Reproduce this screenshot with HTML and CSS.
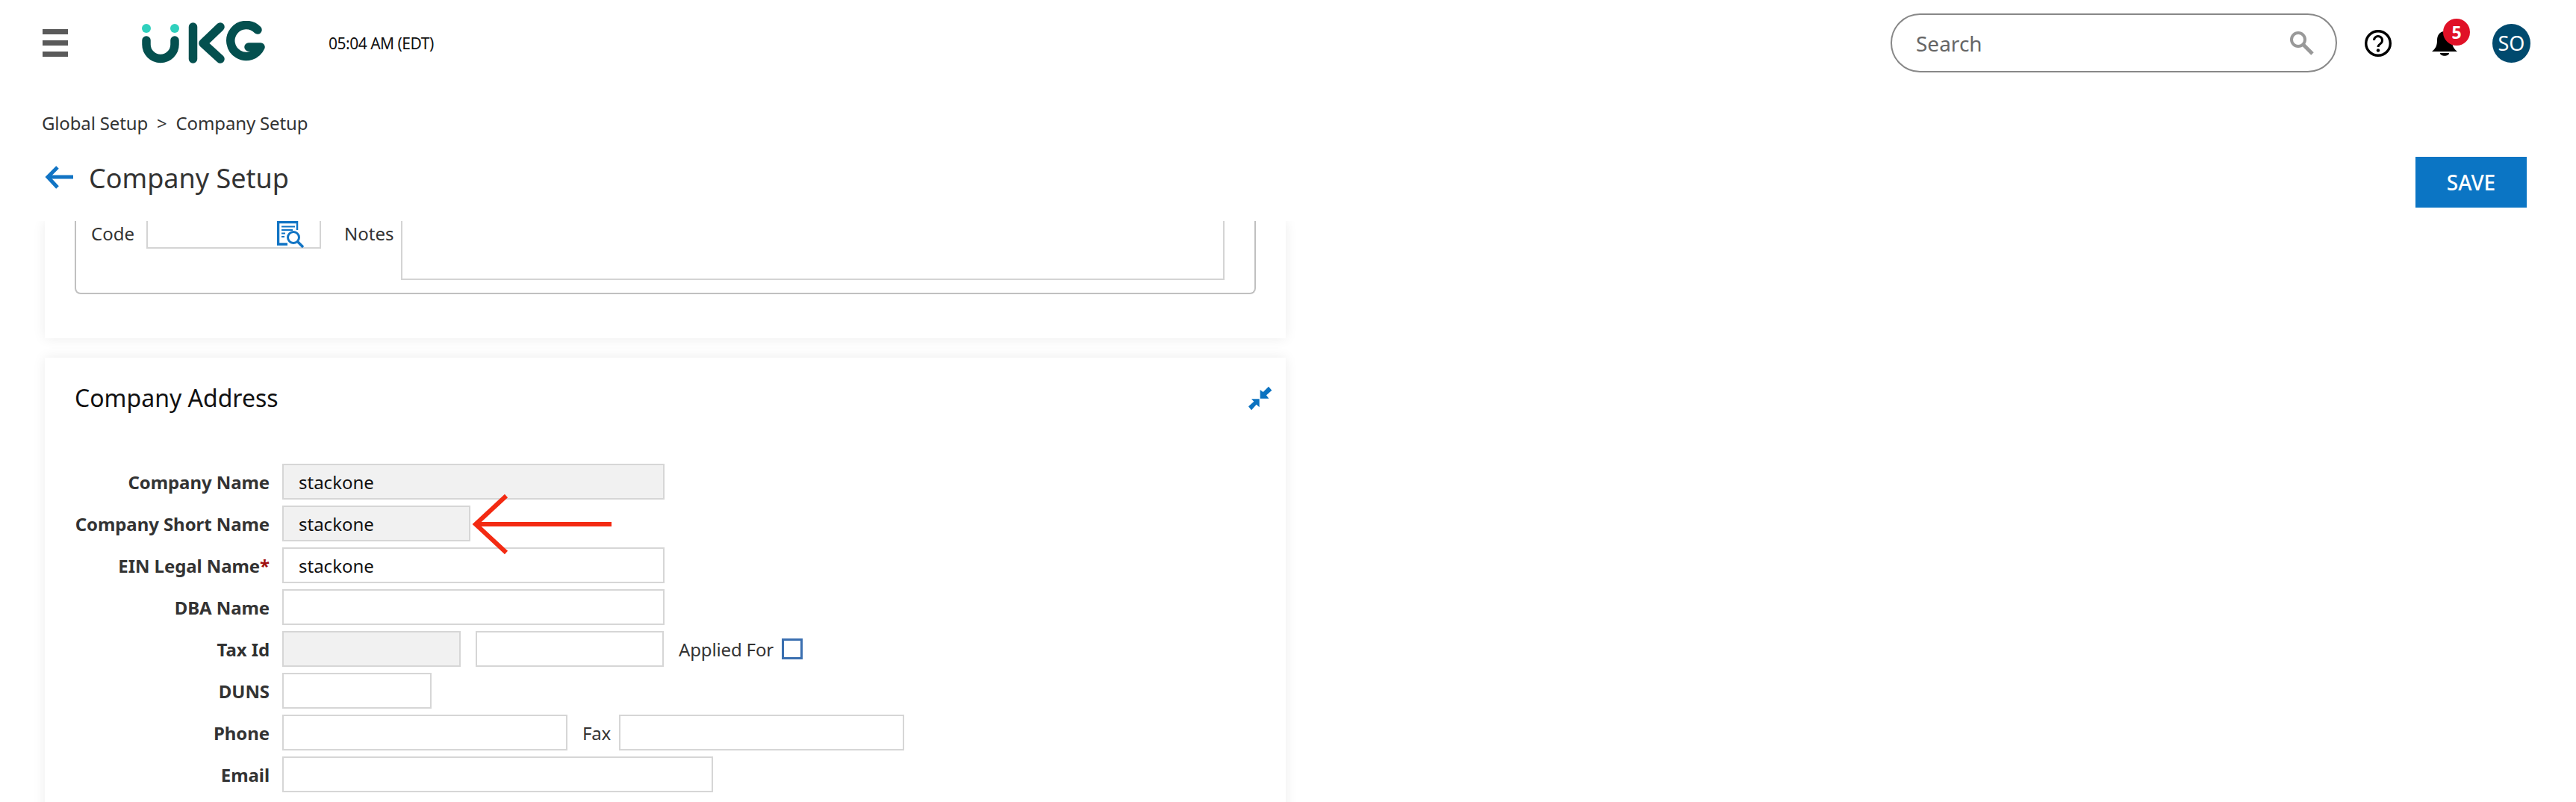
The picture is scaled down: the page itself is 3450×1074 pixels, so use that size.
FILE: index.html
```html
<!DOCTYPE html>
<html lang="en">
<head>
    <meta charset="UTF-8">
    <title>Company Setup</title>
    <link rel="stylesheet" href="styles.css">
</head>
<body>
    <header class="topbar">
        <div class="hamburger"><span></span><span></span><span></span></div>
        <svg class="logo" width="170" height="60" viewBox="188 32 170 60" fill="none" stroke="#04504f" stroke-width="11.500" stroke-linecap="round" stroke-linejoin="round">
            <circle cx="196" cy="42" r="6" fill="#2fd0bd" stroke="none"/>
            <circle cx="234" cy="42" r="6" fill="#2fd0bd" stroke="none"/>
            <path d="M196 58V63.500A19 19 0 0 0 234 63.500V58"/>
            <path d="M258.500 40V83"/>
            <path d="M295 40L272 62L295 83"/>
            <path d="M345 44A21 21 0 1 0 349 67H333"/>
        </svg>
        <span class="clock">05:04 AM (EDT)</span>
        <div class="search">
            <input type="text" placeholder="Search">
            <svg width="34" height="34" viewBox="0 0 34 34" fill="none" stroke="#999">
                <circle cx="12" cy="12" r="9" stroke-width="4"/>
                <path d="M19 19L31 31" stroke-width="5"/>
            </svg>
        </div>
        <svg class="help" width="36" height="36" viewBox="0 0 36 36" fill="none" stroke="#000" stroke-width="3.400">
            <circle cx="18" cy="18" r="16.300"/>
            <path d="M12.500 14a5.500 5.500 0 1 1 8.800 4.400c-2.200 1.600-3.300 2.400-3.300 4.600" stroke-width="3"/>
            <circle cx="18" cy="27.500" r="2.200" fill="#000" stroke="none"/>
        </svg>
        <div class="bell">
            <svg width="34" height="34" viewBox="0 0 34 34">
                <path d="M17 1C10 1 7 7 7 13C7 20 5 24 0 28H34C29 24 27 20 27 13C27 7 24 1 17 1Z"/>
                <path d="M11 30H23C23 35 11 35 11 30Z"/>
            </svg>
            <span class="badge">5</span>
        </div>
        <div class="avatar">SO</div>
    </header>

    <div class="breadcrumb">Global Setup<span class="crumb-sep">&gt;</span>Company Setup</div>

    <div class="page-head">
        <div class="page-title">
            <svg width="38" height="32" viewBox="0 0 38 32" fill="none" stroke="#1174c4" stroke-width="5">
                <path d="M38 15H5"/>
                <path d="M17 2L4 15L17 29"/>
            </svg>
            <h1>Company Setup</h1>
        </div>
        <button type="button" class="save-btn">SAVE</button>
    </div>

    <main class="content">
        <section class="card card-top">
            <div class="group-box">
                <label class="inline-label">Code</label>
                <div class="code-field">
                    <svg width="38" height="36" viewBox="0 0 38 36" fill="none" stroke="#1174c4">
                        <path d="M27 1.500H1.500V31H14" stroke-width="3.500"/>
                        <path d="M27 0V12" stroke-width="2.500"/>
                        <path d="M6 7.500H24M6 12H21M6 16.500H11M6 21H10" stroke-width="2"/>
                        <circle cx="22" cy="22" r="7.500" stroke-width="3"/>
                        <path d="M27.500 27.500L35 35" stroke-width="3.500"/>
                    </svg>
                </div>
                <label class="inline-label notes-label">Notes</label>
                <div class="notes-field"></div>
            </div>
        </section>

        <section class="card card-address">
            <div class="card-head">
                <h2>Company Address</h2>
                <svg width="35" height="35" viewBox="60 45 105 105" fill="#0b72c0">
                    <polygon points="113,98 113,63 125,72 147,50 160,65 138,85 148,98"/>
                    <polygon points="110,100 110,133 98,122 78,145 66,130 88,110 78,100"/>
                </svg>
            </div>

            <div class="form-row">
                <label>Company Name</label>
                <input type="text" class="w-full locked" value="stackone" readonly>
            </div>
            <div class="form-row">
                <label>Company Short Name</label>
                <input type="text" class="w-short locked" value="stackone" readonly>
            </div>
            <div class="form-row">
                <label>EIN Legal Name<span class="req">*</span></label>
                <input type="text" class="w-full" value="stackone">
            </div>
            <div class="form-row">
                <label>DBA Name</label>
                <input type="text" class="w-full">
            </div>
            <div class="form-row">
                <label>Tax Id</label>
                <input type="text" class="w-tax locked" readonly>
                <input type="text" class="w-tax2 gap-left">
                <span class="side-label">Applied For</span>
                <span class="check"></span>
            </div>
            <div class="form-row">
                <label>DUNS</label>
                <input type="text" class="w-duns">
            </div>
            <div class="form-row">
                <label>Phone</label>
                <input type="text" class="w-phone">
                <span class="side-label">Fax</span>
                <input type="text" class="w-phone">
            </div>
            <div class="form-row">
                <label>Email</label>
                <input type="text" class="w-email">
            </div>

            <!-- red annotation arrow -->
            <svg class="annotation" width="192" height="84" viewBox="630 660 192 84" fill="none" stroke="#f32a12" stroke-width="6">
                <path d="M637 702H819"/>
                <path d="M678 664L637 702L678 740"/>
            </svg>
        </section>
    </main>
</body>
</html>
```

FILE: styles.css
```css
* {
    box-sizing: border-box;
}
html, body {
    height: 100%;
}
body {
    margin: 0;
    overflow: hidden;
    background-color: #fff;
    color: #333;
    font-family: "Noto Sans", "Open Sans", sans-serif;
    font-size: 24px;
}

/* top bar */
.topbar {
    display: flex;
    align-items: center;
    height: 115px;
    padding: 0 61px 0 57px;
}
.hamburger {
    display: flex;
    flex-direction: column;
    gap: 8px;
    width: 34px;
    margin-right: 97px;
}
.hamburger span {
    height: 7px;
    background-color: #5a5a5a;
}
.logo {
    flex: none;
}
.clock {
    margin-left: 82px;
    color: #111;
    font-size: 21px;
    letter-spacing: -0.5px;
}
.search {
    display: flex;
    align-items: center;
    width: 598px;
    height: 79px;
    margin-left: auto;
    padding: 0 28px 0 30px;
    border: 2px solid #888;
    border-radius: 40px;
}
.search input {
    flex: 1;
    min-width: 0;
    border: 0;
    outline: 0;
    font-family: inherit;
    font-size: 28px;
}
.search input::placeholder {
    color: #666;
    opacity: 1;
}
.help {
    margin-left: 37px;
}
.bell {
    position: relative;
    width: 34px;
    height: 34px;
    margin-left: 54px;
}
.badge {
    position: absolute;
    top: -16px;
    left: 15px;
    width: 36px;
    height: 36px;
    border-radius: 50%;
    background-color: #e01127;
    color: #fff;
    font-size: 23px;
    font-weight: 700;
    line-height: 36px;
    text-align: center;
}
.avatar {
    width: 51px;
    height: 52px;
    margin-left: 47px;
    border-radius: 50%;
    background-color: #004a6e;
    color: #fff;
    font-size: 27px;
    line-height: 52px;
    text-align: center;
}

/* breadcrumb and page title */
.breadcrumb {
    padding: 33px 0 0 56px;
    line-height: 34px;
    letter-spacing: -0.15px;
}
.crumb-sep {
    margin: 0 12px;
}
.page-head {
    display: flex;
    justify-content: space-between;
    padding: 28px 66px 18px 60px;
}
.page-title {
    display: flex;
    align-items: center;
    height: 56px;
}
.page-title h1 {
    margin: 0 0 0 21px;
    font-size: 36px;
    font-weight: 400;
}
.save-btn {
    width: 149px;
    height: 68px;
    border: 0;
    background-color: #0b75c4;
    color: #fff;
    font-family: inherit;
    font-size: 28px;
    font-weight: 500;
}

/* cards */
.content {
    height: 778px;
    overflow: hidden;
    padding-left: 60px;
}
.card {
    position: relative;
    width: 1662px;
    background-color: #fff;
    box-shadow: 0 0 16px rgba(0, 0, 0, 0.08);
}
.card-top {
    height: 157px;
    padding: 0 40px;
}
.group-box {
    display: flex;
    align-items: flex-start;
    height: 98px;
    padding-left: 20px;
    border: 2px solid #c0c0c0;
    border-top: 0;
    border-radius: 0 0 8px 8px;
}
.inline-label {
    line-height: 34px;
}
.code-field {
    display: flex;
    justify-content: flex-end;
    width: 234px;
    height: 37px;
    margin-left: 16px;
    padding-right: 19px;
    border: 2px solid #d4d4d4;
    border-top: 0;
}
.notes-label {
    margin-left: 31px;
}
.notes-field {
    width: 1103px;
    height: 79px;
    margin-left: 10px;
    border: 2px solid #d4d4d4;
    border-top: 0;
}
.card-address {
    margin-top: 26px;
    height: 800px;
    padding: 32px 17px 0 40px;
}
.card-head {
    display: flex;
    align-items: center;
    justify-content: space-between;
    margin-bottom: 66px;
}
.card-head h2 {
    margin: 0;
    color: #111;
    font-size: 32px;
    font-weight: 400;
    line-height: 44px;
}

/* form rows */
.form-row {
    display: flex;
    align-items: center;
    height: 48px;
    margin-bottom: 8px;
}
.form-row label {
    display: flex;
    justify-content: flex-end;
    width: 261px;
    margin-right: 17px;
    font-weight: 700;
    letter-spacing: -0.08px;
    white-space: nowrap;
}
.form-row input {
    height: 48px;
    padding: 0 20px;
    border: 2px solid #d6d6d6;
    border-radius: 0;
    background-color: #fff;
    color: #111;
    font-family: inherit;
    font-size: 24px;
}
.form-row input.locked {
    background-color: #f1f1f1;
}
.req {
    color: #a01010;
}
.w-full { width: 512px; }
.w-short { width: 252px; }
.w-tax { width: 239px; }
.w-tax2 { width: 252px; }
.w-duns { width: 200px; }
.w-phone { width: 382px; }
.w-email { width: 577px; }
.gap-left {
    margin-left: 20px;
}
.side-label {
    margin: 0 11px 0 20px;
    letter-spacing: -0.15px;
}
.check {
    width: 28px;
    height: 28px;
    border: 3px solid #3a6fb0;
}
.annotation {
    position: absolute;
    top: 181px;
    left: 570px;
}
```
